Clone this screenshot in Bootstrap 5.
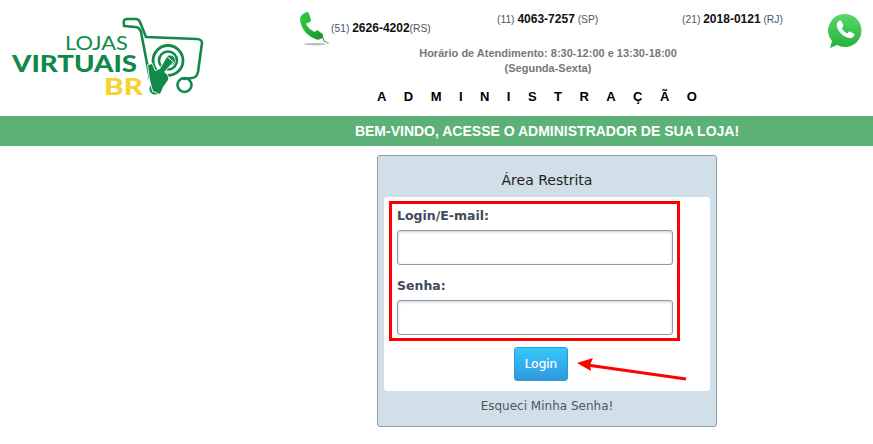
<!DOCTYPE html>
<html lang="pt-BR">
<head>
<meta charset="utf-8">
<title>Administração</title>
<link rel="stylesheet" href="https://cdn.jsdelivr.net/npm/bootstrap@5.3.0/dist/css/bootstrap.min.css">
<style>
html,body{background:#fff;overflow:hidden}
body{font-family:"Liberation Sans",Arial,sans-serif;color:#333}
.topbar{height:116px}
.logo-box{width:221px;flex:none}
.logo-art{display:block;width:221px;height:110px}
.contact-box{width:652px;flex:none;position:relative}
.phones{height:44px;padding-left:79px;font-size:10.3px;color:#4c5560;line-height:14px}
.phones b{font-size:12px;color:#111}
.ph{flex:none;white-space:nowrap}
.ph-a{width:197px;display:flex;align-items:flex-start;padding-top:10px}
.ph-a span{margin:11px 0 0 0}
.ph-b{width:185px;padding-top:12px}
.ph-c{width:146px;padding-top:12px}
.wa{margin-top:14px;display:block}
.hours{width:510px;margin-left:72px;text-align:center;font-weight:700;font-size:11px;line-height:15px;color:#777;margin-top:2px}
.admin{font-weight:700;font-size:13px;letter-spacing:17.45px;color:#000;line-height:16px;margin-top:13px;margin-left:156px;white-space:nowrap}
.band{background:#5cb176;height:30px;padding-left:221px;color:#fff;font-weight:700;font-size:14px;line-height:30px;text-align:center}
.stage{padding-left:221px;padding-top:9px;position:relative}
.login-card{width:340px;height:272px;background:#d1dfe8;border:1px solid #8d9fab;border-radius:3px;font-family:"DejaVu Sans",sans-serif;padding:0 6px}
.login-title{font-size:14px;line-height:20px;color:#222;text-align:center;padding:14px 0 7px}
.login-inner{background:#fff;border-radius:3px;height:194px;padding:4px 0 0 5px}
.red-box{width:291px;height:140px;border:3px solid #f00;padding:3px 5px 0}
.fld-label{font-size:12.5px;font-weight:700;color:#3f4a5a;line-height:18px;margin:0 0 5px;display:block}
.fld{height:35px;width:276px;border:1px solid #8a9aa8;border-radius:3px;box-shadow:inset 0 1px 3px rgba(0,0,0,.2);padding:0 6px;font-size:12px}
.fld-gap{margin-top:12px}
.go{width:54px;height:34px;margin:6px 0 0 125px;padding:0;border:1px solid #2f9ad8;border-radius:3px;background:linear-gradient(#35c8fc,#2f97dc);color:#fff;font-size:12px;line-height:32px;text-shadow:0 0 1px rgba(255,255,255,.5);display:block}
.forgot{font-size:12px;line-height:18px;color:#50565f;text-align:center;padding-top:6px}
.pointer{position:absolute;left:575px;top:212px;display:block}
</style>
</head>
<body>
<div class="topbar d-flex">
  <div class="logo-box">
    <svg class="logo-art" viewBox="0 0 221 110" aria-label="Lojas Virtuais BR">
      <g fill="none" stroke="#12894a" stroke-width="2.600" stroke-linejoin="round" stroke-linecap="round">
        <path d="M124 25c-1-4 0-6 3-6h9c2 0 3 1 4 3l6 15 51 2c3 0 5 2 5 4l-4 29c-1 4-3 6-6 6l-8 1"/>
        <path d="M124 26l11 1c3 0 5 2 6 5l9 47"/>
        <circle cx="184.500" cy="85" r="7"/>
        <circle cx="168" cy="60.500" r="15" stroke-width="2.800"/>
        <circle cx="168" cy="60.500" r="9"/>
      </g>
      <circle cx="170" cy="60.500" r="5" fill="#12894a"/>
      <circle cx="155" cy="89" r="4.500" fill="none" stroke="#12894a" stroke-width="2.200"/>
      <path d="M167 57l6 5-9 10c3 2 5 5 4 8l-5 7-3 7-7-3-3-11-2-15 4-1 3 7 5-2z" fill="#12894a" stroke="#fff" stroke-width="1.600" paint-order="stroke"/>
      <text x="65" y="49.500" font-family="Lato,sans-serif" font-size="19" fill="#12894a" textLength="63" lengthAdjust="spacingAndGlyphs">LOJAS</text>
      <text x="12" y="72" font-family="Lato,sans-serif" font-weight="900" font-size="23" fill="#12894a" textLength="125" lengthAdjust="spacingAndGlyphs">VIRTUAIS</text>
      <text x="104" y="95" font-family="Lato,sans-serif" font-weight="900" font-size="23.500" fill="#f8d22e" textLength="39" lengthAdjust="spacingAndGlyphs">BR</text>
    </svg>
  </div>
  <div class="contact-box">
    <div class="phones d-flex">
      <div class="ph ph-a">
        <svg width="31" height="37" viewBox="0 0 31 37" aria-hidden="true">
          <defs><linearGradient id="phg" x1="0" y1="0" x2="1" y2="1"><stop offset="0" stop-color="#2cd33f"/><stop offset="1" stop-color="#1c8f35"/></linearGradient></defs>
          <ellipse cx="15" cy="34.200" rx="11" ry="1.300" fill="#bdbdbd"/>
          <path d="M0 8C0 6 5 2 7 2c1 0 2 1 2.500 3L11 10c0 1-1 2-2 2.500l-3 1c1 3.500 5 7 9 8.500l2-2 5 3.500c1 1 1.500 3 1 4.500l-4 1.500c-1 .3-2 .3-3-.2C7 26 0 18 0 8z" fill="url(#phg)"/>
          <path d="M23 28c1 1 .5 3 1.500 3.500s1.500-.5 2 .5 1 1 2 1" stroke="#1c8f35" stroke-width="1" fill="none"/>
        </svg>
        <span>(51) <b>2626-4202</b>(RS)</span>
      </div>
      <div class="ph ph-b">(11) <b>4063-7257</b> (SP)</div>
      <div class="ph ph-c">(21) <b>2018-0121</b> (RJ)</div>
      <svg class="wa" width="34" height="34" viewBox="0 0 34 34" aria-hidden="true">
        <defs><linearGradient id="wag" x1="0" y1="0" x2="0" y2="1"><stop offset="0" stop-color="#5bd768"/><stop offset="1" stop-color="#22b13c"/></linearGradient></defs>
        <path d="M17 0a16.500 16.500 0 0 1 0 33c-3 0-5.500-.7-8-2l-7 3 2-7A16.500 16.500 0 0 1 17 0z" fill="url(#wag)"/>
        <path d="M11 7c1-.6 2-.5 2.500.3l1.800 3.700c.3.700 0 1.300-.5 1.900l-1 1.200c1.200 2.400 3 4.200 5.500 5.400l1.400-1.500c.5-.5 1-.6 1.600-.3l3.500 1.700c.7.4.8 1 .5 1.900-.7 2-2.600 3-4.500 2.800-6.500-.8-12.500-7-13-12.800C8.600 9.500 9.500 8 11 7z" fill="#fff"/>
      </svg>
    </div>
    <div class="hours">Horário de Atendimento: 8:30-12:00 e 13:30-18:00<div>(Segunda-Sexta)</div></div>
    <div class="admin">ADMINISTRAÇÃO</div>
  </div>
</div>
<div class="band">BEM-VINDO, ACESSE O ADMINISTRADOR DE SUA LOJA!</div>
<div class="stage">
  <div class="login-card mx-auto">
    <div class="login-title">Área Restrita</div>
    <div class="login-inner">
      <form>
        <div class="red-box">
          <label class="fld-label" for="u">Login/E-mail:</label>
          <input class="form-control fld" id="u" type="text">
          <label class="fld-label fld-gap" for="s">Senha:</label>
          <input class="form-control fld" id="s" type="password">
        </div>
        <button class="btn go" type="button">Login</button>
      </form>
    </div>
    <div class="forgot">Esqueci Minha Senha!</div>
  </div>
  <svg class="pointer" width="115" height="24" viewBox="0 0 115 24" aria-hidden="true">
    <path d="M111 21 12 7" stroke="#f00" stroke-width="3" fill="none"/>
    <path d="M2 5 18 0l-3 7 1 6z" fill="#f00"/>
  </svg>
</div>
<script src="https://cdn.jsdelivr.net/npm/bootstrap@5.3.0/dist/js/bootstrap.bundle.min.js"></script>
</body>
</html>
